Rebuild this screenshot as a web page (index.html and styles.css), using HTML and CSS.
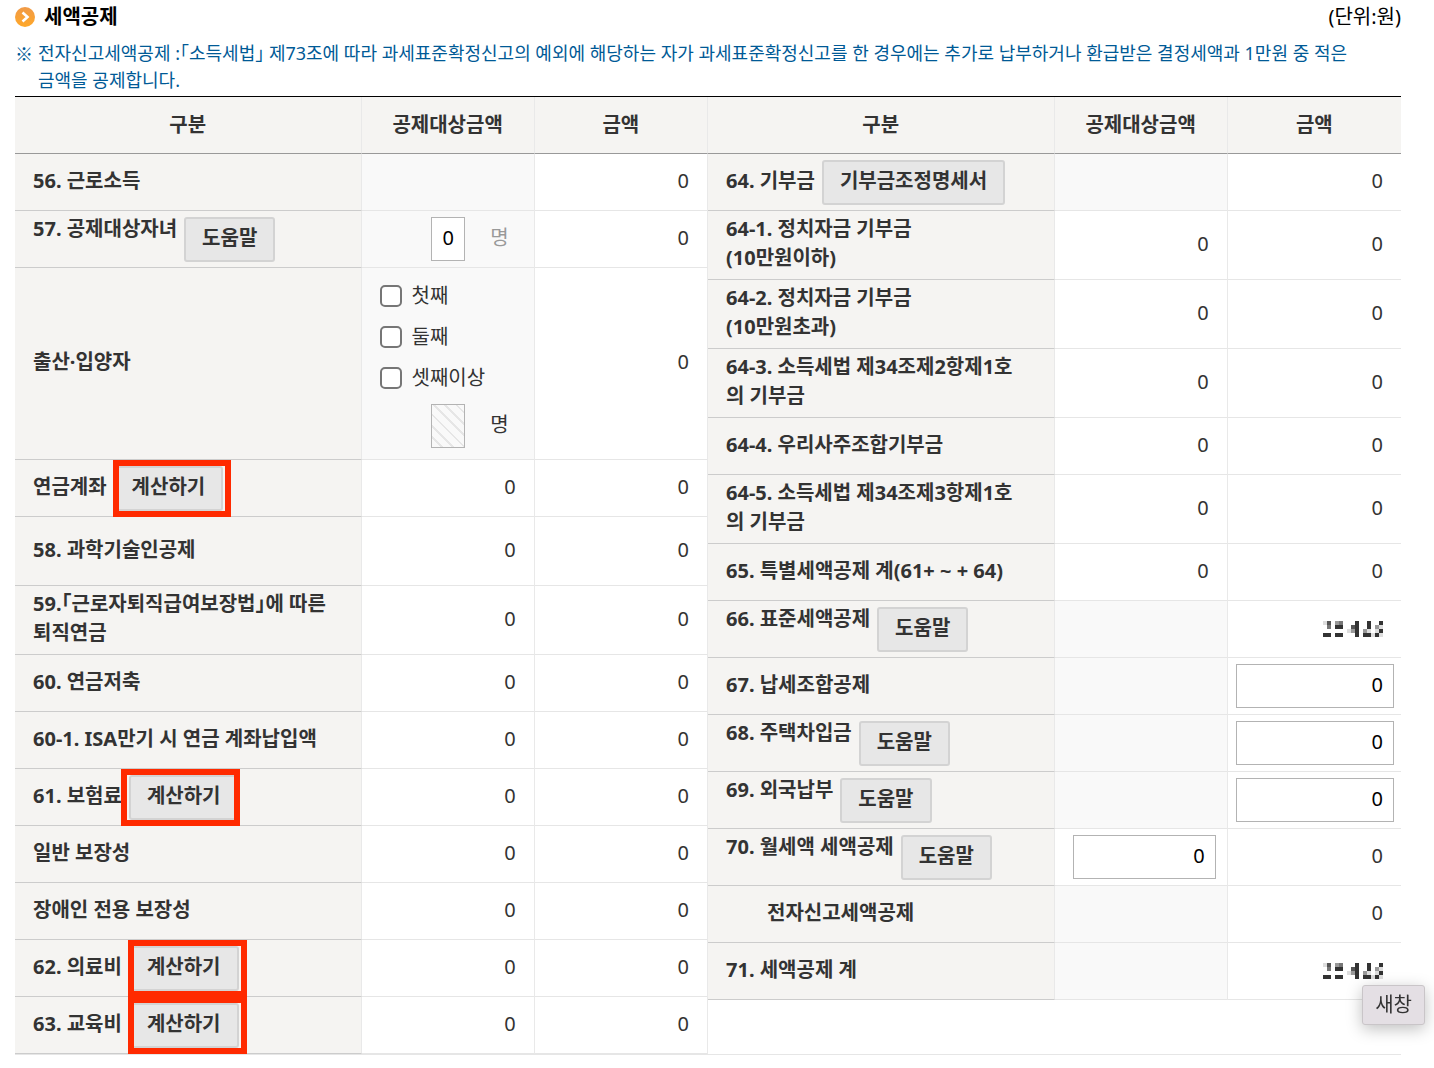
FILE: index.html
```html
<!DOCTYPE html>
<html lang="ko">
<head>
  <meta charset="UTF-8">
  <meta name="viewport" content="width=device-width, initial-scale=1">
  <title>세액공제</title>
  <link rel="stylesheet" href="styles.css">
</head>
<body>
<!-- 제목 -->
<header class="title-bar">
  <h1 class="title">
    <svg class="title-icon" viewBox="0 0 20 20" aria-hidden="true">
      <defs>
        <linearGradient id="bullet" x1="0" y1="0" x2="0" y2="1">
          <stop offset="0" stop-color="#f09a48"/>
          <stop offset="1" stop-color="#ffa828"/>
        </linearGradient>
      </defs>
      <circle cx="10" cy="10" r="10" fill="url(#bullet)"/>
      <path d="M7.5 5.5 12.5 10 7.5 14.5" fill="none" stroke="#fff" stroke-width="2.6"/>
    </svg>
    세액공제
  </h1>
  <span class="unit">(단위:원)</span>
</header>
<p class="note"><span class="note-mark">※</span><span>전자신고세액공제 :「소득세법」 제73조에 따라 과세표준확정신고의 예외에 해당하는 자가 과세표준확정신고를 한 경우에는 추가로 납부하거나 환급받은 결정세액과 1만원 중 적은 금액을 공제합니다.</span></p>

<!-- 가려진 금액 -->
<svg class="defs" width="0" height="0" aria-hidden="true">
  <symbol id="masked" viewBox="0 0 60 16">
    <path d="M0 12h8v4H0zM12 4h8v4h-8zM12 12h8v4h-8zM32 0h4v16h-4zM44 0h4v8h-4zM40 12h8v4h-8zM56 0h4v4h-4zM56 8h4v4h-4zM52 12h4v4h-4z" fill="#333"/>
    <path d="M4 0h4v4H4z" fill="#555"/>
    <path d="M4 4h4v4H4zM16 0h4v4h-4z" fill="#777"/>
    <path d="M12 0h4v4h-4zM28 8h4v4h-4zM52 4h4v4h-4zM40 8h4v4h-4z" fill="#999"/>
    <path d="M28 4h4v4h-4z" fill="#555"/>
    <path d="M0 0h4v4H0zM24 8h4v4h-4zM44 8h4v4h-4zM56 4h4v4h-4zM52 8h4v4h-4zM48 12h4v4h-4zM56 12h4v4h-4z" fill="#ddd"/>
  </symbol>
</svg>

<main class="tables">
  <table class="tax-table">
    <thead>
      <tr><th class="col-name">구분</th><th>공제대상금액</th><th>금액</th></tr>
    </thead>
    <tbody>
      <tr><th>56. 근로소득</th><td class="blank"></td><td>0</td></tr>
      <tr>
        <th class="with-btn"><div class="name help"><label for="child">57. 공제대상자녀</label><button type="button" class="btn">도움말</button></div></th>
        <td class="blank people"><div class="count off"><input id="child" class="box small" type="text" value="0"><span>명</span></div></td>
        <td>0</td>
      </tr>
      <tr class="birth">
        <th>출산·입양자</th>
        <td class="blank">
          <label class="check"><input type="checkbox">첫째</label>
          <label class="check"><input type="checkbox">둘째</label>
          <label class="check"><input type="checkbox">셋째이상</label>
          <div class="count"><input class="box small" type="text" aria-label="셋째이상 인원" disabled><span>명</span></div>
        </td>
        <td>0</td>
      </tr>
      <tr><th class="with-btn"><div class="name">연금계좌<span class="mark"><button type="button" class="btn">계산하기</button></span></div></th><td>0</td><td>0</td></tr>
      <tr class="tall"><th>58. 과학기술인공제</th><td>0</td><td>0</td></tr>
      <tr class="tall"><th>59.「근로자퇴직급여보장법」에 따른 퇴직연금</th><td>0</td><td>0</td></tr>
      <tr><th>60. 연금저축</th><td>0</td><td>0</td></tr>
      <tr><th>60-1. ISA만기 시 연금 계좌납입액</th><td>0</td><td>0</td></tr>
      <tr><th class="with-btn"><div class="name">61. 보험료<span class="mark mark-left"><button type="button" class="btn">계산하기</button></span></div></th><td>0</td><td>0</td></tr>
      <tr><th>일반 보장성</th><td>0</td><td>0</td></tr>
      <tr><th>장애인 전용 보장성</th><td>0</td><td>0</td></tr>
      <tr><th class="with-btn"><div class="name">62. 의료비<span class="mark"><button type="button" class="btn">계산하기</button></span></div></th><td>0</td><td>0</td></tr>
      <tr><th class="with-btn"><div class="name">63. 교육비<span class="mark"><button type="button" class="btn">계산하기</button></span></div></th><td>0</td><td>0</td></tr>
    </tbody>
  </table>

  <table class="tax-table">
    <thead>
      <tr><th class="col-name">구분</th><th>공제대상금액</th><th>금액</th></tr>
    </thead>
    <tbody>
      <tr><th class="with-btn"><div class="name">64. 기부금<button type="button" class="btn">기부금조정명세서</button></div></th><td class="blank"></td><td>0</td></tr>
      <tr class="tall"><th>64-1. 정치자금 기부금<br>(10만원이하)</th><td>0</td><td>0</td></tr>
      <tr class="tall"><th>64-2. 정치자금 기부금<br>(10만원초과)</th><td>0</td><td>0</td></tr>
      <tr class="tall"><th>64-3. 소득세법 제34조제2항제1호<br>의 기부금</th><td>0</td><td>0</td></tr>
      <tr><th>64-4. 우리사주조합기부금</th><td>0</td><td>0</td></tr>
      <tr class="tall"><th>64-5. 소득세법 제34조제3항제1호<br>의 기부금</th><td>0</td><td>0</td></tr>
      <tr><th>65. 특별세액공제 계(61+ ~ + 64)</th><td>0</td><td>0</td></tr>
      <tr>
        <th class="with-btn"><div class="name help">66. 표준세액공제<button type="button" class="btn">도움말</button></div></th>
        <td class="blank"></td>
        <td><svg class="masked"><use href="#masked"/></svg></td>
      </tr>
      <tr>
        <th><label for="union">67. 납세조합공제</label></th>
        <td class="blank"></td>
        <td class="field"><input id="union" class="box" type="text" value="0"></td>
      </tr>
      <tr>
        <th class="with-btn"><div class="name help"><label for="house">68. 주택차입금</label><button type="button" class="btn">도움말</button></div></th>
        <td class="blank"></td>
        <td class="field"><input id="house" class="box" type="text" value="0"></td>
      </tr>
      <tr>
        <th class="with-btn"><div class="name help"><label for="foreign">69. 외국납부</label><button type="button" class="btn">도움말</button></div></th>
        <td class="blank"></td>
        <td class="field"><input id="foreign" class="box" type="text" value="0"></td>
      </tr>
      <tr>
        <th class="with-btn"><div class="name help"><label for="rent">70. 월세액 세액공제</label><button type="button" class="btn">도움말</button></div></th>
        <td class="field inset"><input id="rent" class="box" type="text" value="0"></td>
        <td>0</td>
      </tr>
      <tr><th class="sub">전자신고세액공제</th><td class="blank"></td><td>0</td></tr>
      <tr><th>71. 세액공제 계</th><td class="blank"></td><td><svg class="masked"><use href="#masked"/></svg></td></tr>
    </tbody>
  </table>
</main>

<button type="button" class="popup">새창</button>
</body>
</html>
```

FILE: styles.css
```css
* {
  box-sizing: border-box;
}
body {
  margin: 0;
  padding: 2px 33px 14px 15px;
  background: #fff;
  color: #333;
  font-family: "Noto Sans", "Noto Sans CJK KR", sans-serif;
  font-size: 20px;
  line-height: 29px;
  font-feature-settings: "halt";
}
button, input {
  font: inherit;
}
.defs {
  position: absolute;
}
/* 제목 */
.title-bar {
  display: flex;
  justify-content: space-between;
  color: #000;
}
.title {
  display: flex;
  align-items: center;
  gap: 9px;
  margin: 0;
  font-size: 20px;
  font-weight: 700;
}
.title-icon {
  width: 20px;
  height: 20px;
}
.note {
  display: flex;
  gap: 5px;
  margin: 9px 0 2px;
  color: #005a96;
  font-size: 18px;
  line-height: 27px;
  word-break: keep-all;
}
.note-mark {
  flex: none;
  width: 18px;
  font-family: "Noto Sans CJK KR", sans-serif;
}
/* 표 */
.tables {
  display: flex;
  align-items: flex-start;
  border-top: 1px solid #000;
  border-bottom: 1px solid #e6e6e6;
}
.tax-table {
  flex: 1;
  width: 50%;
  table-layout: fixed;
  border-collapse: separate;
  border-spacing: 0;
}
.tax-table th, .tax-table td {
  height: 57px;
  padding: 0 18px 4px;
  border-right: 1px solid #e9e9e9;
  border-bottom: 1px solid #e6e6e6;
}
.tax-table td {
  text-align: right;
}
.tax-table th {
  background: #f5f4f2;
  font-weight: 700;
}
.tax-table thead th {
  padding-bottom: 2px;
  border-bottom-color: #999;
}
.tax-table .col-name {
  width: 50%;
}
.tax-table tbody th {
  border-bottom-color: #ccc;
  text-align: left;
}
.tax-table + .tax-table tr > :last-child {
  border-right: 0;
}
.tax-table .blank {
  background: #f9f9f9;
}
.tax-table .with-btn, .tax-table .people {
  padding-bottom: 0;
}
.tax-table .tall > * {
  height: 69px;
}
.tax-table .birth > * {
  height: 192px;
}
.tax-table .sub {
  padding-left: 59px;
}
.tax-table .field {
  padding: 0 7px 0 8px;
}
.tax-table .inset {
  padding: 0 11px 0 18px;
}
/* 항목 이름과 버튼 */
.name {
  display: flex;
  align-items: baseline;
  gap: 7px;
}
.help {
  align-items: flex-start;
  line-height: 24px;
}
.btn {
  height: 45px;
  padding: 0 16px 3px;
  border: 2px solid #d3d3d3;
  border-radius: 3px;
  background: #e7e7e7;
  color: #333;
  font-weight: 700;
  line-height: 29px;
  white-space: nowrap;
}
/* 빨간 강조 테두리 */
.mark {
  position: relative;
  display: flex;
}
.mark::after {
  content: "";
  position: absolute;
  inset: -6px -8px -6px -1px;
  border: 6px solid #ff2a00;
  pointer-events: none;
}
.mark-left::after {
  inset: -6px -1px -6px -8px;
}
/* 입력 */
.box {
  display: block;
  width: 100%;
  height: 44px;
  padding: 0 10px 4px;
  border: 1px solid #b3b3b3;
  border-radius: 0;
  background: #fff;
  color: #000;
  text-align: right;
}
.small {
  width: 34px;
  padding: 0 0 4px;
  text-align: center;
}
.box:disabled {
  background: repeating-linear-gradient(45deg, #f9f9f9 0 6px, #e6e6e6 6px 8px);
}
.count {
  display: flex;
  justify-content: flex-end;
  align-items: center;
  gap: 25px;
  padding-right: 7px;
}
.count span {
  padding-bottom: 4px;
}
.off {
  color: #999;
}
.check {
  display: flex;
  align-items: center;
  gap: 10px;
  height: 41px;
}
.check input {
  appearance: none;
  width: 22px;
  height: 22px;
  margin: 0;
  border: 2px solid #767676;
  border-radius: 5px;
  background: #fff;
}
.check + .count {
  margin-top: 6px;
}
.masked {
  display: inline-block;
  width: 60px;
  height: 16px;
  vertical-align: middle;
}
/* 새창 */
.popup {
  position: fixed;
  right: 9px;
  bottom: 43px;
  height: 40px;
  padding: 0 12px 2px;
  border: 1px solid #c9c5c8;
  border-radius: 3px;
  background: #e4dfe4;
  color: #333;
  box-shadow: 0 4px 16px rgba(0, 0, 0, 0.25);
}
```
